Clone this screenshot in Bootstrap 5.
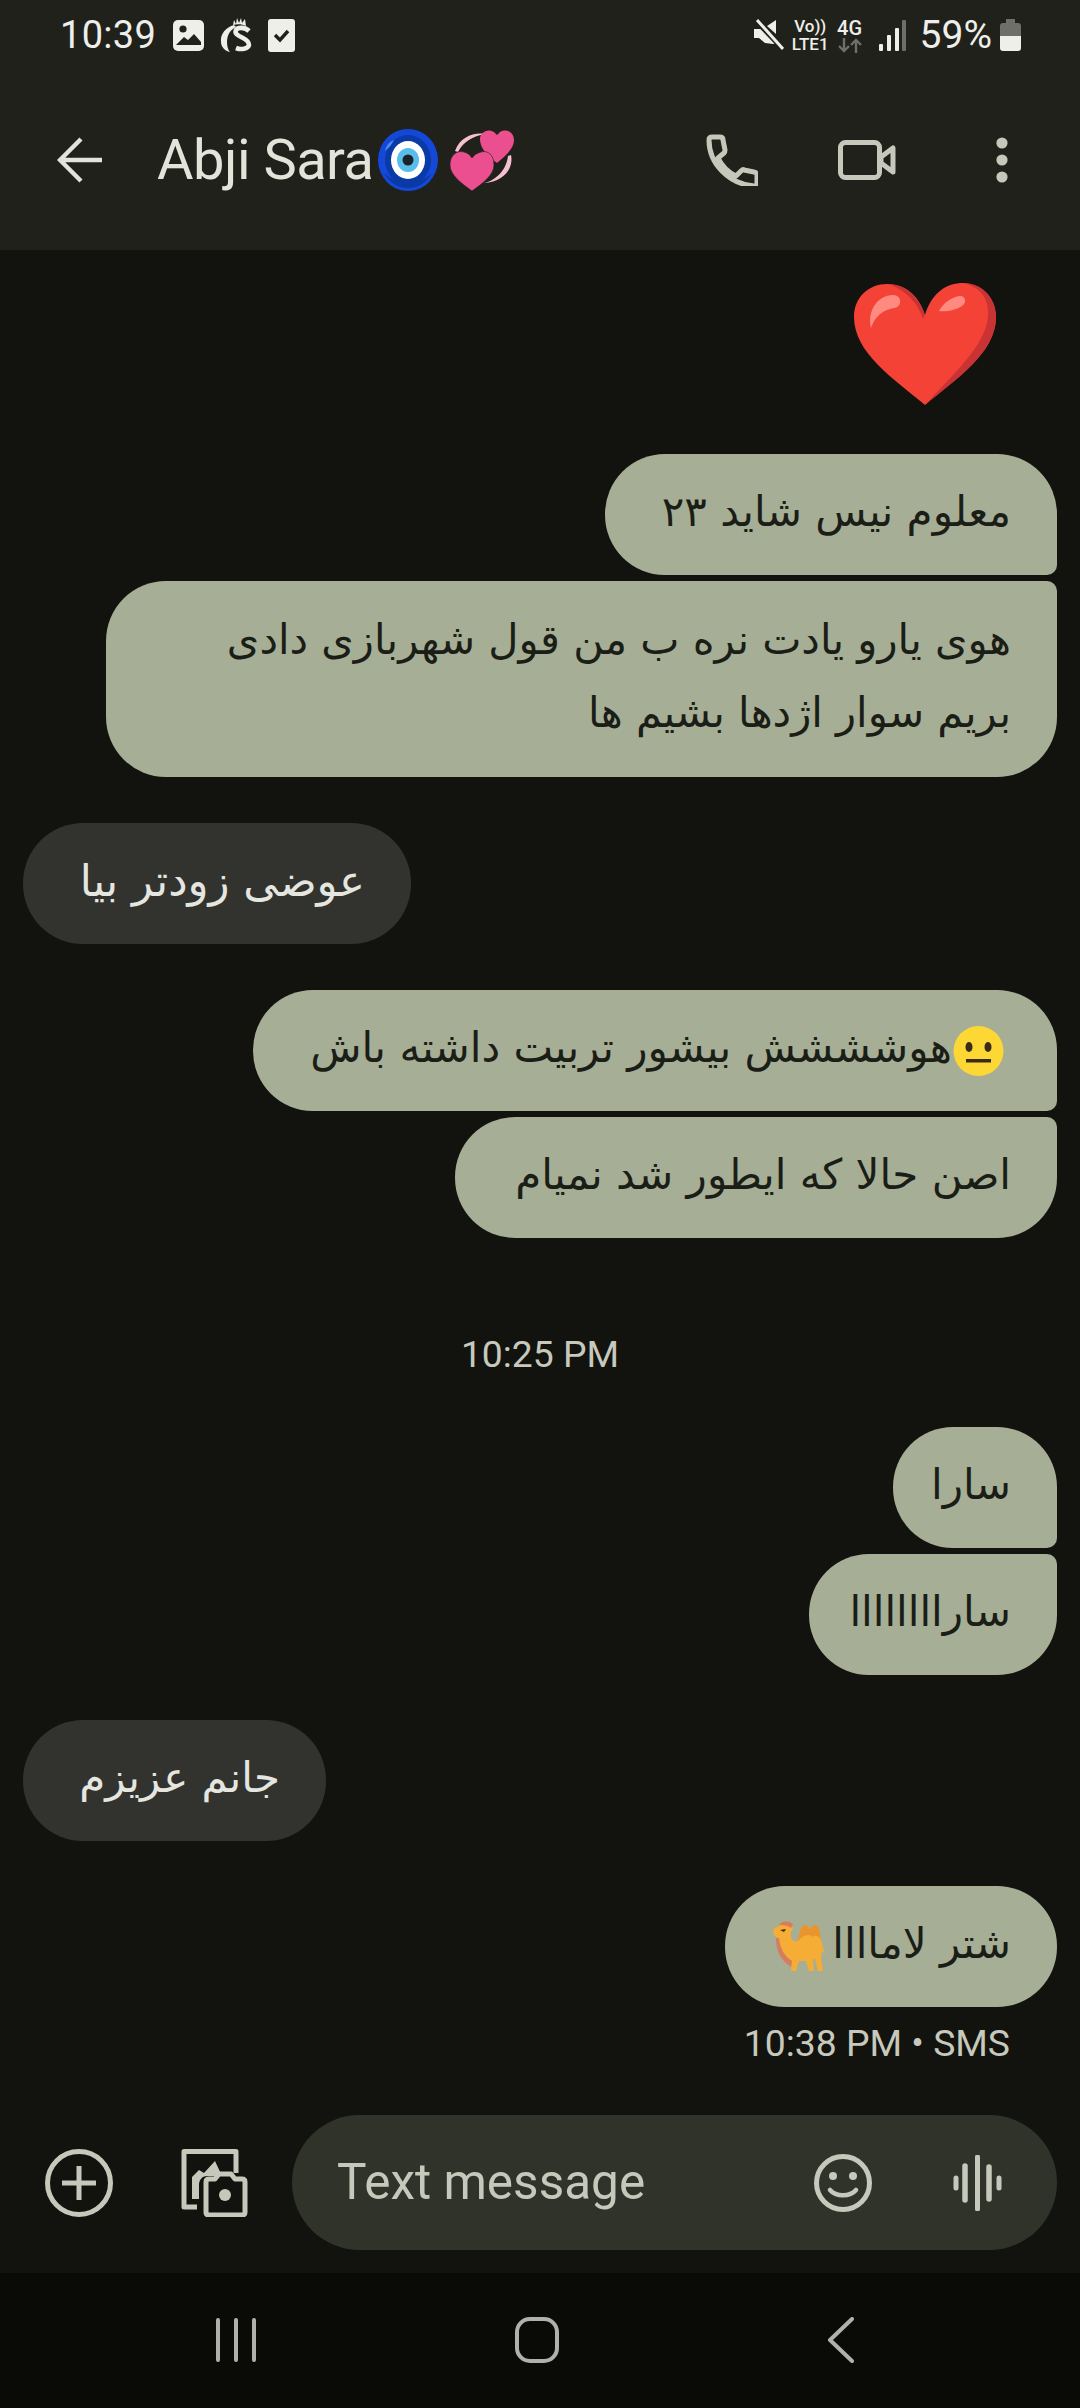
<!DOCTYPE html>
<html lang="en">
<head>
  <meta charset="UTF-8">
  <title>Abji Sara</title>
  <link rel="stylesheet" href="https://cdn.jsdelivr.net/npm/bootstrap@5.3.0/dist/css/bootstrap.min.css">
  <style>
    html, body { margin: 0; background: #12130e; }
    .phone { width: 1080px; height: 2408px; overflow: hidden; font-family: Roboto, "Liberation Sans", sans-serif; }
    .topbar { background: #1f211a; height: 250px; flex: none; }
    .statusrow { height: 70px; padding: 0 59px 0 60px; color: #eeeeea; }
    .clock { font-size: 38px; line-height: 1; margin-right: 17px; letter-spacing: .3px; }
    .pct { font-size: 39px; line-height: 1; margin-left: 14px; margin-right: 8px; }
    .nettext { font-size: 17px; font-weight: 500; line-height: 18px; text-align: center; }
    .nettext-big { font-size: 20px; line-height: 20px; }
    .titlerow { height: 180px; padding-left: 57px; }
    .title { font-size: 56px; line-height: 1; color: #e3e4d9; margin-left: 54px; letter-spacing: -.5px; }
    .msgs { padding: 0 23px; }
    .bub { font-family: "DejaVu Sans", sans-serif; font-size: 42px; line-height: 76px; padding: 20px 46px 25px; direction: rtl; white-space: nowrap; box-sizing: border-box; }
    .sent { background: #a6af95; color: #1b1d17; border-radius: 60px; margin-left: auto; }
    .recv { background: #32332e; color: #e6e6e0; border-radius: 60px; margin-right: auto; }
    .join-next { border-bottom-right-radius: 10px; margin-bottom: 6px; }
    .join-prev { border-top-right-radius: 10px; }
    .w-a { width: 452px; }
    .w-b { width: 951px; font-size: 41.6px; line-height: 73px; padding-top: 22px; padding-bottom: 28px; }
    .w-c { width: 388px; font-size: 43.5px; margin-top: 46px; margin-bottom: 46px; }
    .w-d { width: 804px; padding-right: 52px; }
    .w-e { width: 602px; }
    .w-f { width: 164px; }
    .w-g { width: 248px; }
    .w-h { width: 303px; margin-top: 45px; margin-bottom: 45px; }
    .w-i { width: 332px; }
    .timelabel { font-size: 37.3px; line-height: 44px; color: #c7c9bd; }
    .time-mid { margin-top: 94px; margin-bottom: 51px; }
    .time-end { margin-top: 14px; padding-right: 47px; }
    .bigheart { margin: 33px 61px 49px 0; }
    .composer { height: 158px; flex: none; padding: 0 23px 23px 45px; }
    .pill { background: #30332a; height: 135px; border-radius: 68px; padding: 0 55px 0 45px; color: #c5c8ba; font-size: 49.5px; }
    .navbtm { background: #0a0b07; height: 135px; flex: none; padding-bottom: 2px; }
    .gap-eye { margin-left: 5px; }
    .gap-hearts { margin-left: 12px; }
    .gap-phone { margin-left: 192px; }
    .gap-video { margin-left: 80px; }
    .gap-dots { margin-left: 100px; }
    .gap-gallery { margin-left: 67px; margin-right: 44px; }
    .gap-mic { margin-left: 81px; }
    .nav-a { margin-left: 216px; }
    .nav-b { margin-left: 259px; }
    .nav-c { margin-left: 268px; }
    svg { display: block; flex: none; }
    .emo { display: inline-block; vertical-align: middle; }
    .camel { margin-right: 7px; }
  </style>
</head>
<body>
<div class="phone d-flex flex-column">

  <div class="topbar">
    <div class="statusrow d-flex align-items-center">
      <span class="clock">10:39</span>
      <svg width="31" height="31" viewBox="0 0 31 31"><rect width="31" height="31" rx="5" fill="#eeeeea"/><circle cx="10" cy="9" r="3.6" fill="#1f211a"/><path d="M3 25l8-8 4 3 6-6 7 8v3z" fill="#1f211a"/></svg>
      <svg class="ms-3" width="32" height="36" viewBox="0 0 32 36"><path d="M14 8C6 10 0 17 1 25c0 5 4 9 9 10-2-2-3-6-3-10 0-7 3-12 9-15z" fill="#eeeeea"/><path d="M29 14c-4-4-11-4-13-1-2 4 3 6 7 8 4 2 6 4 6 7-1 4-8 5-13 3" fill="none" stroke="#eeeeea" stroke-width="4.6"/><path d="M13 8l1-5 2 4 1-6 2 5 2-5 1 5 3-4 1 7c-4-2-9-2-13-1z" fill="#eeeeea"/></svg>
      <svg class="ms-3" width="27" height="33" viewBox="0 0 27 33"><rect width="27" height="33" rx="3" fill="#eeeeea"/><path d="M7 16l5 5 8-9" fill="none" stroke="#1f211a" stroke-width="3.4"/></svg>
      <svg class="ms-auto" width="30" height="32" viewBox="0 0 30 32"><path d="M0 10h7l2 0 14 14-4 1-8-1-6-5H0zM13 7l9-6v14z" fill="#eeeeea"/><path d="M4 4l25 26" stroke="#1f211a" stroke-width="5"/><path d="M3 1l26 29" stroke="#eeeeea" stroke-width="3"/></svg>
      <div class="nettext ms-2"><div>Vo))</div><div>LTE1</div></div>
      <div class="nettext nettext-big ms-2"><div>4G</div>
        <svg width="26" height="15" viewBox="0 0 26 15"><path d="M7 0v13M2 8l5 5 5-5M19 15V2M14 7l5-5 5 5" fill="none" stroke="#6d6f68" stroke-width="2.4"/></svg></div>
      <svg class="ms-3" width="27" height="31" viewBox="0 0 27 31"><rect x="0" y="24" width="4" height="7" rx="1" fill="#eeeeea"/><rect x="8" y="15" width="4" height="16" rx="1" fill="#eeeeea"/><rect x="16" y="8" width="4" height="23" rx="1" fill="#eeeeea"/><rect x="23" y="0" width="4" height="31" rx="1" fill="#6d6f68"/></svg>
      <span class="pct">59%</span>
      <svg width="21" height="32" viewBox="0 0 21 32"><path d="M6 0h9v4h3a3 3 0 0 1 3 3v10H0V7a3 3 0 0 1 3-3h3z" fill="#6d6f68"/><path d="M0 17h21v12a3 3 0 0 1-3 3H3a3 3 0 0 1-3-3z" fill="#eeeeea"/></svg>
    </div>
    <div class="titlerow d-flex align-items-center">
      <svg width="46" height="46" viewBox="0 0 46 46"><path d="M45 23H4M24 2L3 23l21 21" fill="none" stroke="#e3e4d9" stroke-width="4.4"/></svg>
      <span class="title">Abji Sara</span>
      <svg class="gap-eye" width="60" height="62" viewBox="0 0 60 62"><ellipse cx="30" cy="31" rx="30" ry="31" fill="#1448d8"/><path d="M6 44c6 10 14 15 24 15s18-5 24-15c-6 6-14 9-24 9S12 50 6 44z" fill="#0a3aa5"/><ellipse cx="30" cy="31" rx="23" ry="25" fill="#0a3aa5"/><ellipse cx="30" cy="31" rx="17" ry="19" fill="#fff"/><ellipse cx="30" cy="31" rx="11" ry="12" fill="#57bdeb"/><circle cx="30" cy="31" r="5.500" fill="#1d2226"/><path d="M7 22c1-5 4-9 9-11-2 4-5 8-9 11z" fill="#4c8ef0"/></svg>
      <svg class="gap-hearts" width="64" height="62" viewBox="0 0 64 62"><path d="M5 22C10 8 24 3 35 5c-12 2-22 8-27 18zM61 26c3 14-8 27-27 28 10-2 22-11 24-27z" fill="#f6bfd2"/><path d="M30 10c0-7 8-11 14-7l3 3 3-3c6-4 14 0 14 8 0 9-9 16-17 23-8-6-17-14-17-24z" fill="#ec4f8f"/><path d="M0 36c0-10 7-15 14-13 4 1 6 3 8 6 2-3 5-5 9-6 7-2 13 3 13 13 0 10-11 18-22 26C11 54 0 46 0 36z" fill="#ec4f8f" stroke="#1f211a" stroke-width=".6"/></svg>
      <svg class="gap-phone" width="52" height="52" viewBox="0 0 52 52"><path d="M3 6c0-2 1-3 3-3h8c2 0 3 1 3 3l2 10c0 2 0 2-1 3l-6 5c4 8 10 14 18 18l5-5c1-1 2-2 3-1l10 2c2 0 3 2 3 3v8c0 2-1 3-3 3C23 50 3 30 3 6z" fill="none" stroke="#c5c8ba" stroke-width="5" stroke-linejoin="round"/></svg>
      <svg class="gap-video" width="58" height="40" viewBox="0 0 58 40"><rect x="2.500" y="2.500" width="39" height="35" rx="5" fill="none" stroke="#c5c8ba" stroke-width="5"/><path d="M43 17l12-9v24l-12-9z" fill="none" stroke="#c5c8ba" stroke-width="5" stroke-linejoin="round"/></svg>
      <svg class="gap-dots" width="12" height="46" viewBox="0 0 12 46"><circle cx="6" cy="6" r="5.600" fill="#c5c8ba"/><circle cx="6" cy="23" r="5.600" fill="#c5c8ba"/><circle cx="6" cy="40" r="5.600" fill="#c5c8ba"/></svg>
    </div>
  </div>

  <div class="msgs flex-grow-1 d-flex flex-column">
    <svg class="align-self-end bigheart" width="142" height="122" viewBox="0 0 142 122">
      <path d="M71 122C40 96 0 70 0 34 0 14 15 1 33 1c16 0 31 9 38 31C78 9 93 0 109 0c18 0 33 14 33 34 0 36-40 62-71 88z" fill="#f44336"/>
      <path d="M71 122c31-26 71-52 71-88 0-20-15-34-33-34 18 4 26 16 25 32-1 30-36 60-63 90zM33 1c17 0 31 10 38 31l-2 4C63 17 48 5 33 1z" fill="#c93333"/>
      <path d="M17 45c-4-16 6-33 22-33 9 0 10 12 1 13-11 2-19 8-23 20zM85 28c5-9 12-13 20-15 7-1 8 7 3 10-6 4-14 6-23 5z" fill="#ff8a80"/>
    </svg>

    <div class="bub sent join-next w-a">معلوم نیس شاید ۲۳</div>
    <div class="bub sent join-prev w-b">هوی یارو یادت نره ب من قول شهربازی دادی<br>بریم سوار اژدها بشیم ها</div>
    <div class="bub recv w-c">عوضی زودتر بیا</div>
    <div class="bub sent join-next w-d"><svg class="emo" width="53" height="50" viewBox="0 0 53 50"><circle cx="26.500" cy="25" r="25" fill="#fdd835"/><ellipse cx="17" cy="21" rx="3.500" ry="5" fill="#3a2a1a"/><ellipse cx="36" cy="21" rx="3.500" ry="5" fill="#3a2a1a"/><rect x="14" y="33" width="25" height="3.500" fill="#3a2a1a"/></svg>هوشششش بیشور تربیت داشته باش</div>
    <div class="bub sent join-prev w-e">اصن حالا که ایطور شد نمیام</div>

    <div class="timelabel time-mid text-center">10:25 PM</div>

    <div class="bub sent join-next w-f">سارا</div>
    <div class="bub sent join-prev w-g">ساراااااااا</div>
    <div class="bub recv w-h">جانم عزیزم</div>
    <div class="bub sent w-i">شتر لاماااا<svg class="emo camel" width="54" height="52" viewBox="0 0 54 52"><path d="M2 9C4 6 9 5 12 3c4-2 8 0 10 4-2 3-3 6-2 10 2 3 5 4 7 3 1-8 3-16 7-16 3 0 4 3 5 4 1-2 3-4 5-4 4 0 5 8 6 16 2 6 3 10 4 13l-3-3-1 6 2 14h-5l-3-12h-2l1 12h-5l-3-10h-7l-3 10h-5l1-10C14 36 9 28 8 17 5 17 2 14 2 9z" fill="#f5ad35"/><path d="M27 20c1-8 3-16 7-16 3 0 4 3 5 4 1-2 3-4 5-4 4 0 5 8 6 14-4-4-6-4-8-2-4-4-10-2-15 4z" fill="#e8952f"/><path d="M8 17c1 11 6 19 13 23l-1 6C10 40 5 30 5 17zM8 4c2-4 10-5 14-1l-2 4c-4-3-8-3-12-3z" fill="#d87c5a"/><path d="M9 9l6-1-2 3z" fill="#3a2a1a"/></svg></div>
    <div class="timelabel time-end text-end">10:38 PM • SMS</div>
  </div>

  <div class="composer d-flex align-items-center">
    <svg width="68" height="68" viewBox="0 0 68 68"><circle cx="34" cy="34" r="31.500" fill="none" stroke="#c5c8ba" stroke-width="5"/><path d="M34 17v34M17 34h34" stroke="#c5c8ba" stroke-width="5"/></svg>
    <svg class="gap-gallery" width="68" height="68" viewBox="0 0 68 68"><path d="M17 58H4V2.500h52V24" fill="none" stroke="#c5c8ba" stroke-width="5" stroke-linejoin="round"/><path d="M12 50V28l7-7 5 3 11-12 7 15H27c-5 0-8 4-8 9v14z" fill="#c5c8ba"/><path d="M26 33c0-2 1-3 3-3h6l4-5h12l4 5h7c2 0 3 1 3 3v30c0 2-1 3-3 3H29c-2 0-3-1-3-3z" fill="#12130e" stroke="#c5c8ba" stroke-width="5" stroke-linejoin="round"/><circle cx="45" cy="46" r="6" fill="#c5c8ba"/></svg>
    <div class="pill flex-grow-1 d-flex align-items-center">
      <span>Text message</span>
      <svg class="ms-auto" width="58" height="58" viewBox="0 0 58 58"><circle cx="29" cy="29" r="26.500" fill="none" stroke="#c5c8ba" stroke-width="5"/><circle cx="19" cy="22" r="4" fill="#c5c8ba"/><circle cx="39" cy="22" r="4" fill="#c5c8ba"/><path d="M16 36c6 7 20 7 26 0" fill="none" stroke="#c5c8ba" stroke-width="4.500" stroke-linecap="round"/></svg>
      <svg class="gap-mic" width="49" height="56" viewBox="0 0 49 56"><g stroke="#c5c8ba" stroke-linecap="round" fill="none"><path d="M3 23v10" stroke-width="5"/><path d="M12 11v34" stroke-width="5.500"/><path d="M24.500 2v52" stroke-width="5"/><path d="M36 12v32" stroke-width="5.500"/><path d="M46 23v10" stroke-width="5"/></g></svg>
    </div>
  </div>

  <div class="navbtm d-flex align-items-center">
    <svg class="nav-a" width="40" height="44" viewBox="0 0 40 44"><path d="M2 2v40M20 2v40M38 2v40" stroke="#b0b0ad" stroke-width="4" stroke-linecap="round"/></svg>
    <svg class="nav-b" width="44" height="46" viewBox="0 0 44 46"><rect x="2" y="2" width="40" height="42" rx="13" fill="none" stroke="#b0b0ad" stroke-width="4"/></svg>
    <svg class="nav-c" width="27" height="46" viewBox="0 0 27 46"><path d="M25 2L3 23l22 21" fill="none" stroke="#b0b0ad" stroke-width="4" stroke-linecap="round" stroke-linejoin="round"/></svg>
  </div>
</div>
<script src="https://cdn.jsdelivr.net/npm/bootstrap@5.3.0/dist/js/bootstrap.bundle.min.js"></script>
</body>
</html>
